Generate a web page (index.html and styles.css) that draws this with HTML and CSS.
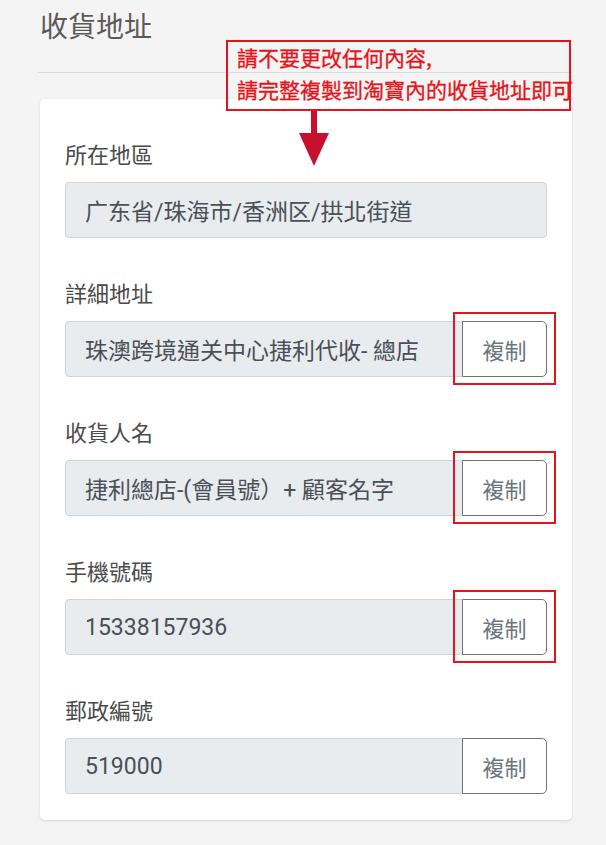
FILE: index.html
```html
<!DOCTYPE html>
<html lang="zh-Hant">
<head>
<meta charset="utf-8">
<title>收貨地址</title>
<link rel="stylesheet" href="styles.css">
</head>
<body>
<div class="page">
  <h1 class="title">收貨地址</h1>
  <hr class="rule">
  <div class="card">
    <div class="field">
      <div class="label">所在地區</div>
      <div class="input full">广东省/珠海市/香洲区/拱北街道</div>
    </div>
    <div class="field">
      <div class="label">詳細地址</div>
      <div class="group">
        <div class="input">珠澳跨境通关中心捷利代收- 總店</div>
        <button class="copy">複制</button>
        <span class="mark"></span>
      </div>
    </div>
    <div class="field">
      <div class="label">收貨人名</div>
      <div class="group">
        <div class="input">捷利總店-(會員號）+ 顧客名字</div>
        <button class="copy">複制</button>
        <span class="mark"></span>
      </div>
    </div>
    <div class="field">
      <div class="label">手機號碼</div>
      <div class="group">
        <div class="input">15338157936</div>
        <button class="copy">複制</button>
        <span class="mark"></span>
      </div>
    </div>
    <div class="field">
      <div class="label">郵政編號</div>
      <div class="group">
        <div class="input">519000</div>
        <button class="copy">複制</button>
      </div>
    </div>
  </div>
  <div class="note">
    <div class="note-line">請不要更改任何內容,</div>
    <div class="note-line">請完整複製到淘寶內的收貨地址即可</div>
  </div>
  <svg class="arrow" width="32" height="56" viewBox="0 0 32 56">
    <rect x="13" y="0" width="6" height="26" fill="#c8102e"/>
    <polygon points="1,22 31,22 16,55" fill="#c8102e"/>
  </svg>
</div>
</body>
</html>
```
FILE: styles.css
```css
* { box-sizing: border-box; }
html, body { margin: 0; padding: 0; }
body {
  background: #f4f4f4;
  font-family: Roboto, "Noto Sans CJK TC", sans-serif;
  color: #555;
}
.page {
  position: relative;
  width: 606px;
  min-height: 845px;
  padding: 11px 34px 0 38px;
}
.title {
  margin: 0 0 0 2px;
  font-size: 28px;
  font-weight: normal;
  line-height: 34px;
  color: #5a5a5a;
}
.rule {
  margin: 27px 0 0 0;
  border: 0;
  border-top: 1px solid #dcdcdc;
}
.card {
  margin: 26px 0 0 2px;
  background: #fff;
  border-radius: 5px;
  box-shadow: 0 1px 3px rgba(0,0,0,0.12);
  padding: 39px 25px 26px 25px;
  display: flex;
  flex-direction: column;
  gap: 39px;
}
.field {
  display: flex;
  flex-direction: column;
  gap: 14px;
}
.label {
  font-family: "Noto Sans CJK TC", sans-serif;
  font-size: 22px;
  line-height: 30px;
  color: #4a4a4a;
}
.group {
  position: relative;
  display: flex;
}
.input {
  flex: 1;
  height: 56px;
  background: #e9ecef;
  border: 1px solid #ced4da;
  border-radius: 4px 0 0 4px;
  padding: 0 19px;
  display: flex;
  align-items: center;
  font-size: 23px;
  color: #495057;
  white-space: nowrap;
  overflow: hidden;
}
.input.full { border-radius: 4px; flex: none; }
.copy {
  width: 85px;
  height: 56px;
  margin-left: -1px;
  background: #fff;
  border: 1px solid #6c757d;
  border-radius: 0 5px 5px 0;
  font-family: "Noto Sans CJK TC", sans-serif;
  font-size: 22px;
  color: #6c757d;
  padding: 0;
}
.mark {
  position: absolute;
  top: -9px;
  bottom: -8px;
  right: -9px;
  width: 103px;
  border: 2px solid #e3141b;
}
.note {
  position: absolute;
  left: 226px;
  top: 40px;
  width: 345px;
  height: 71px;
  border: 2px solid #e3141b;
  padding: 0 0 6px 9px;
  font-family: "Noto Sans CJK TC", sans-serif;
  font-size: 21px;
  font-weight: normal;
  color: #e3141b;
  display: flex;
  flex-direction: column;
  justify-content: center;
  white-space: nowrap;
  -webkit-text-stroke: 0.3px #e3141b;
}
.note-line {
  height: 32px;
  line-height: 32px;
}
.arrow {
  position: absolute;
  left: 298px;
  top: 111px;
}
```
